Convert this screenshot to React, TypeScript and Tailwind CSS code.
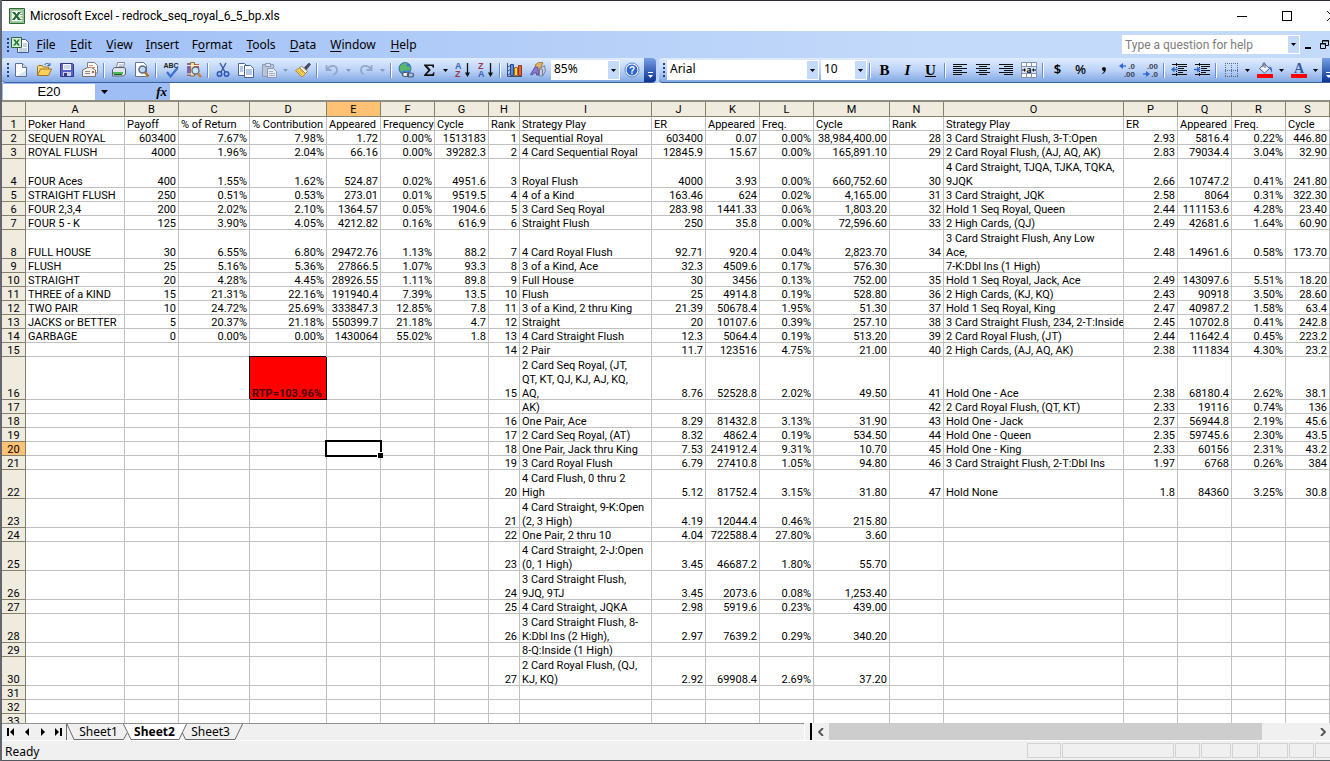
import type { ReactNode } from "react";
import clsx from "clsx";

const columns = [
  { name: "A", width: "w-[99px]" },
  { name: "B", width: "w-[54px]" },
  { name: "C", width: "w-[71px]" },
  { name: "D", width: "w-[77px]" },
  { name: "E", width: "w-[54px]" },
  { name: "F", width: "w-[54px]" },
  { name: "G", width: "w-[54px]" },
  { name: "H", width: "w-[31px]" },
  { name: "I", width: "w-[132px]" },
  { name: "J", width: "w-[54px]" },
  { name: "K", width: "w-[54px]" },
  { name: "L", width: "w-[54px]" },
  { name: "M", width: "w-[76px]" },
  { name: "N", width: "w-[54px]" },
  { name: "O", width: "w-[180px]" },
  { name: "P", width: "w-[54px]" },
  { name: "Q", width: "w-[54px]" },
  { name: "R", width: "w-[54px]" },
  { name: "S", width: "" },
];

const textColumns = ["A", "I", "O"];

// columns A-G, starting at row 1
const payoffs = [
  ["Poker Hand", "Payoff", "% of Return", "% Contribution", "Appeared", "Frequency", "Cycle"],
  ["SEQUEN ROYAL", "603400", "7.67%", "7.98%", "1.72", "0.00%", "1513183"],
  ["ROYAL FLUSH", "4000", "1.96%", "2.04%", "66.16", "0.00%", "39282.3"],
  ["FOUR Aces", "400", "1.55%", "1.62%", "524.87", "0.02%", "4951.6"],
  ["STRAIGHT FLUSH", "250", "0.51%", "0.53%", "273.01", "0.01%", "9519.5"],
  ["FOUR 2,3,4", "200", "2.02%", "2.10%", "1364.57", "0.05%", "1904.6"],
  ["FOUR 5 - K", "125", "3.90%", "4.05%", "4212.82", "0.16%", "616.9"],
  ["FULL HOUSE", "30", "6.55%", "6.80%", "29472.76", "1.13%", "88.2"],
  ["FLUSH", "25", "5.16%", "5.36%", "27866.5", "1.07%", "93.3"],
  ["STRAIGHT", "20", "4.28%", "4.45%", "28926.55", "1.11%", "89.8"],
  ["THREE of a KIND", "15", "21.31%", "22.16%", "191940.4", "7.39%", "13.5"],
  ["TWO PAIR", "10", "24.72%", "25.69%", "333847.3", "12.85%", "7.8"],
  ["JACKS or BETTER", "5", "20.37%", "21.18%", "550399.7", "21.18%", "4.7"],
  ["GARBAGE", "0", "0.00%", "0.00%", "1430064", "55.02%", "1.8"],
  [],
  ["", "", "", "RTP=103.96%"],
];

// columns H-M
const topPlays = [
  ["Rank", "Strategy Play", "ER", "Appeared", "Freq.", "Cycle"],
  ["1", "Sequential Royal", "603400", "0.07", "0.00%", "38,984,400.00"],
  ["2", "4 Card Sequential Royal", "12845.9", "15.67", "0.00%", "165,891.10"],
  ["3", "Royal Flush", "4000", "3.93", "0.00%", "660,752.60"],
  ["4", "4 of a Kind", "163.46", "624", "0.02%", "4,165.00"],
  ["5", "3 Card Seq Royal", "283.98", "1441.33", "0.06%", "1,803.20"],
  ["6", "Straight Flush", "250", "35.8", "0.00%", "72,596.60"],
  ["7", "4 Card Royal Flush", "92.71", "920.4", "0.04%", "2,823.70"],
  ["8", "3 of a Kind, Ace", "32.3", "4509.6", "0.17%", "576.30"],
  ["9", "Full House", "30", "3456", "0.13%", "752.00"],
  ["10", "Flush", "25", "4914.8", "0.19%", "528.80"],
  ["11", "3 of a Kind, 2 thru King", "21.39", "50678.4", "1.95%", "51.30"],
  ["12", "Straight", "20", "10107.6", "0.39%", "257.10"],
  ["13", "4 Card Straight Flush", "12.3", "5064.4", "0.19%", "513.20"],
  ["14", "2 Pair", "11.7", "123516", "4.75%", "21.00"],
  ["15", "2 Card Seq Royal, (JT,\nQT, KT, QJ, KJ, AJ, KQ,\nAQ,", "8.76", "52528.8", "2.02%", "49.50"],
  ["", "AK)"],
  ["16", "One Pair, Ace", "8.29", "81432.8", "3.13%", "31.90"],
  ["17", "2 Card Seq Royal, (AT)", "8.32", "4862.4", "0.19%", "534.50"],
  ["18", "One Pair, Jack thru King", "7.53", "241912.4", "9.31%", "10.70"],
  ["19", "3 Card Royal Flush", "6.79", "27410.8", "1.05%", "94.80"],
  ["20", "4 Card Flush, 0 thru 2\nHigh", "5.12", "81752.4", "3.15%", "31.80"],
  ["21", "4 Card Straight, 9-K:Open\n(2, 3 High)", "4.19", "12044.4", "0.46%", "215.80"],
  ["22", "One Pair, 2 thru 10", "4.04", "722588.4", "27.80%", "3.60"],
  ["23", "4 Card Straight, 2-J:Open\n(0, 1 High)", "3.45", "46687.2", "1.80%", "55.70"],
  ["24", "3 Card Straight Flush,\n9JQ, 9TJ", "3.45", "2073.6", "0.08%", "1,253.40"],
  ["25", "4 Card Straight, JQKA", "2.98", "5919.6", "0.23%", "439.00"],
  ["26", "3 Card Straight Flush, 8-\nK:Dbl Ins (2 High),", "2.97", "7639.2", "0.29%", "340.20"],
  ["", "8-Q:Inside (1 High)"],
  ["27", "2 Card Royal Flush, (QJ,\nKJ, KQ)", "2.92", "69908.4", "2.69%", "37.20"],
];

// columns N-S
const lowPlays = [
  ["Rank", "Strategy Play", "ER", "Appeared", "Freq.", "Cycle"],
  ["28", "3 Card Straight Flush, 3-T:Open", "2.93", "5816.4", "0.22%", "446.80"],
  ["29", "2 Card Royal Flush, (AJ, AQ, AK)", "2.83", "79034.4", "3.04%", "32.90"],
  ["30", "4 Card Straight, TJQA, TJKA, TQKA,\n9JQK", "2.66", "10747.2", "0.41%", "241.80"],
  ["31", "3 Card Straight, JQK", "2.58", "8064", "0.31%", "322.30"],
  ["32", "Hold 1 Seq Royal, Queen", "2.44", "111153.6", "4.28%", "23.40"],
  ["33", "2 High Cards, (QJ)", "2.49", "42681.6", "1.64%", "60.90"],
  ["34", "3 Card Straight Flush, Any Low\nAce,", "2.48", "14961.6", "0.58%", "173.70"],
  ["", "7-K:Dbl Ins (1 High)"],
  ["35", "Hold 1 Seq Royal, Jack, Ace", "2.49", "143097.6", "5.51%", "18.20"],
  ["36", "2 High Cards, (KJ, KQ)", "2.43", "90918", "3.50%", "28.60"],
  ["37", "Hold 1 Seq Royal, King", "2.47", "40987.2", "1.58%", "63.4"],
  ["38", "3 Card Straight Flush, 234, 2-T:Inside", "2.45", "10702.8", "0.41%", "242.8"],
  ["39", "2 Card Royal Flush, (JT)", "2.44", "11642.4", "0.45%", "223.2"],
  ["40", "2 High Cards, (AJ, AQ, AK)", "2.38", "111834", "4.30%", "23.2"],
  ["41", "Hold One - Ace", "2.38", "68180.4", "2.62%", "38.1"],
  ["42", "2 Card Royal Flush, (QT, KT)", "2.33", "19116", "0.74%", "136"],
  ["43", "Hold One - Jack", "2.37", "56944.8", "2.19%", "45.6"],
  ["44", "Hold One - Queen", "2.35", "59745.6", "2.30%", "43.5"],
  ["45", "Hold One - King", "2.33", "60156", "2.31%", "43.2"],
  ["46", "3 Card Straight Flush, 2-T:Dbl Ins", "1.97", "6768", "0.26%", "384"],
  ["47", "Hold None", "1.8", "84360", "3.25%", "30.8"],
];

const rowNumbers = Array.from({ length: 33 }, (_, i) => i + 1);

function cellValue(row: number, col: number) {
  if (col < 7) return payoffs[row]?.[col] ?? "";
  if (col < 13) return topPlays[row]?.[col - 7] ?? "";
  return lowPlays[row]?.[col - 13] ?? "";
}

function Icon({ children, className }: { children: ReactNode; className?: string }) {
  return (
    <svg viewBox="0 0 16 16" className={clsx("h-4 w-4 shrink-0", className)} fill="none" aria-hidden="true">
      {children}
    </svg>
  );
}

const Page = ({ x = 0, y = 0 }: { x?: number; y?: number }) => (
  <path d={`M${x + 0.5} ${y + 0.5}h6l3 3v9h-9z`} fill="#fff" stroke="#4a648f" />
);

const icons = {
  new: (
    <Icon>
      <path d="M2.5 1.5h7l4 4v9h-11z" fill="#fff" stroke="#5c6f93" />
      <path d="M9.500 1.500v4h4" fill="#d5e0f2" stroke="#5c6f93" />
      <path d="M4 14h9V8z" fill="#dbe4f3" />
    </Icon>
  ),
  open: (
    <Icon>
      <path d="M1.500 13.500v-9l1-1h4l1 1.500h5v3" fill="#f7d774" stroke="#a1762a" />
      <path d="M1.500 13.500l3-6.500h11l-3 6.500z" fill="#ffcf5c" stroke="#a1762a" />
      <path d="M8.500 3C10 .8 12.500 1 13.500 3M11.500 3.500h2.500V1" stroke="#37619f" />
    </Icon>
  ),
  save: (
    <Icon>
      <path d="M1.500 1.500h12l1 1v12h-13z" fill="#5b62c6" stroke="#35388a" />
      <path d="M4 2h8v6H4z" fill="#f4f6ff" />
      <path d="M5 4h6M5 6h6" stroke="#a9b4da" />
      <path d="M4 10h8v4H4z" fill="#cbd0ea" />
      <path d="M5 11h3v3H5z" fill="#35388a" />
    </Icon>
  ),
  mail: (
    <Icon>
      <path d="M5.500 7V.5h7l3 3V11h-3" fill="#fff" stroke="#7a7f8d" />
      <path d="M.5 8l5-2.500h4L13.500 8v6.500H.5z" fill="#f3f1ee" stroke="#77736e" />
      <path d="M3 9.500h5M3 11.500h5" stroke="#8b8b92" />
      <path d="M10 9h2v2h-2z" fill="#e04e2e" />
      <path d="M7 3.500h4M7 5.500h6" stroke="#d98a6c" />
    </Icon>
  ),
  print: (
    <Icon>
      <path d="M5.500 6l1-5.500h7L12.500 6" fill="#fff" stroke="#7d8799" />
      <path d="M1.500 7.500l2-2h10l1 1.500v5l-2 2h-11z" fill="#dfe4ea" stroke="#556070" />
      <path d="M2 10h10v2H2z" fill="#4cba52" />
      <path d="M3 12.500h8" stroke="#1f5824" />
      <path d="M8 3h4M7.500 4.500h4" stroke="#9aa8bf" />
    </Icon>
  ),
  preview: (
    <Icon>
      <path d="M1.500.5h8l3 3v11h-11z" fill="#fff" stroke="#66738f" />
      <circle cx="8.500" cy="7.500" r="3.500" fill="#bcdcf7" stroke="#5d6a7e" strokeWidth="1.500" />
      <path d="M11 10.500l3.500 4" stroke="#b0752c" strokeWidth="2.500" />
    </Icon>
  ),
  spelling: (
    <Icon>
      <text x="8" y="6" textAnchor="middle" fontSize="7" fontWeight="700" fill="#1b1b1b" fontFamily="Liberation Sans, sans-serif">
        ABC
      </text>
      <path d="M4 10l3.500 4.500L14.500 6" stroke="#3c6fd0" strokeWidth="2.200" />
    </Icon>
  ),
  research: (
    <Icon>
      <path d="M1 1h3v13H1z" fill="#7d62b5" />
      <path d="M4.500.5h4v13.500h-4z" fill="#f0dca4" stroke="#8b7338" />
      <path d="M9 2h4v9H9z" fill="#cf5540" />
      <path d="M1 3.500h12M1 12h6" stroke="#f6ecd2" />
      <circle cx="9.500" cy="8.500" r="3.500" fill="#cfe6fa" stroke="#5d6a7e" strokeWidth="1.300" />
      <path d="M12 11.500l3 3.500" stroke="#c48332" strokeWidth="2.500" />
    </Icon>
  ),
  cut: (
    <Icon>
      <path d="M5 1l5 9M11 1L6 10" stroke="#3f5f9c" strokeWidth="1.500" />
      <circle cx="4.500" cy="12" r="2.200" stroke="#2b55b5" strokeWidth="1.500" />
      <circle cx="11.500" cy="12" r="2.200" stroke="#2b55b5" strokeWidth="1.500" />
    </Icon>
  ),
  copy: (
    <Icon>
      <Page y={1} />
      <Page x={6} y={3} />
      <path d="M2 5h3M2 7h3M2 9h3M8 8h6M8 10h6M8 12h6" stroke="#6690d6" />
    </Icon>
  ),
  paste: (
    <Icon>
      <path d="M1.500 2.500h11v12h-11z" fill="#b9c4d8" stroke="#8c99b4" />
      <path d="M4.500 1.500h5v3h-5z" fill="#dbe2ee" stroke="#8c99b4" />
      <path d="M6.500 6.500h6l3 3v6h-9z" fill="#e6ecf6" stroke="#8c99b4" />
      <path d="M8 9.500h4M8 11.500h6M8 13.500h6" stroke="#a2aec5" />
    </Icon>
  ),
  painter: (
    <Icon>
      <path d="M9.500 5.500L14 1l1.500 1.500L11.500 7.500z" fill="#4a4f63" stroke="#30374a" strokeWidth=".7" />
      <path d="M6.500 4l6 5.500-2 2-6-5.500z" fill="#f4efe0" stroke="#7a6a45" strokeWidth=".8" />
      <path d="M4.500 6l6 5.500-3.500 3.500L.5 8.500z" fill="#ffd65a" stroke="#9b7420" strokeWidth=".8" />
      <path d="M3 9l4 4M5 8l3.500 3.500" stroke="#c28f26" strokeWidth=".7" />
    </Icon>
  ),
  undo: (
    <Icon>
      <path d="M2.500 3v5h5M3 7.500C6 2.500 12.500 3 13 7.500c.2 2.500-1.500 4.500-4 5.500" stroke="#95a7c8" strokeWidth="1.800" />
    </Icon>
  ),
  redo: (
    <Icon>
      <path d="M13.500 3v5h-5M13 7.500C10 2.500 3.500 3 3 7.500c-.2 2.500 1 4 2.500 5" stroke="#95a7c8" strokeWidth="1.800" />
    </Icon>
  ),
  link: (
    <Icon>
      <circle cx="7" cy="6.500" r="6" fill="#3e86d0" stroke="#285a92" strokeWidth=".8" />
      <path d="M2 4.500c2-3.500 5-4 7-3L8 4l3 1.500L9 9l-3-1-2.500 2C1.500 8 1.500 6 2 4.500zM11 4l1.500 1.500-.5 4-2-2z" fill="#5cb862" />
      <rect x="4.500" y="10.500" width="6" height="4" rx="2" fill="#e9edf3" stroke="#4e5a6c" strokeWidth="1.200" />
      <rect x="9.500" y="11" width="6" height="4" rx="2" stroke="#4e5a6c" strokeWidth="1.200" />
    </Icon>
  ),
  sum: (
    <Icon>
      <path d="M3 2.500h10v3.200h-1.200c-.3-1.300-.8-1.600-2-1.600H6.300L9.800 8l-4 4.200h4.500c1.300 0 1.700-.5 2-1.900h1.200L13 14H3v-1l4.300-4.700L3 3.400z" fill="#111" />
    </Icon>
  ),
  sortAsc: (
    <Icon>
      <text x="0" y="7" fontSize="9" fontWeight="700" fill="#3a5fb4" fontFamily="Liberation Sans, sans-serif">A</text>
      <text x="0" y="15" fontSize="9" fontWeight="700" fill="#a4374c" fontFamily="Liberation Sans, sans-serif">Z</text>
      <path d="M12.500 1v12" stroke="#111" strokeWidth="1.300" />
      <path d="M10 10.500h5L12.500 15z" fill="#111" />
    </Icon>
  ),
  sortDesc: (
    <Icon>
      <text x="0" y="7" fontSize="9" fontWeight="700" fill="#a4374c" fontFamily="Liberation Sans, sans-serif">Z</text>
      <text x="0" y="15" fontSize="9" fontWeight="700" fill="#3a5fb4" fontFamily="Liberation Sans, sans-serif">A</text>
      <path d="M12.500 1v12" stroke="#111" strokeWidth="1.300" />
      <path d="M10 10.500h5L12.500 15z" fill="#111" />
    </Icon>
  ),
  chart: (
    <Icon>
      <path d="M.5 1v13.500H15M1 13l3-2M1 9l3-2M1 5l3-2" stroke="#3d4d6e" />
      <path d="M3.500 2.500h3v11h-3z" fill="#5b8be0" stroke="#27498e" />
      <path d="M7.500 5.500h3v8h-3z" fill="#ffd04d" stroke="#9a7018" />
      <path d="M11.500 3.500h3v10h-3z" fill="#e8603b" stroke="#98341b" />
    </Icon>
  ),
  drawing: (
    <Icon>
      <path d="M5 3l3.500-2.500H13L9.500 8.500H6.500z" fill="#e0b066" stroke="#8d6731" strokeWidth=".7" />
      <path d="M.5 12.500L5 5h2.500l1.500 8H6.500v-2h-3l-1 2z" fill="#8c7bd3" stroke="#4e408f" strokeWidth=".8" />
      <path d="M9.500 6.500l5-3 1 5.500-3 5h-3z" fill="#c6cddb" stroke="#66718a" strokeWidth=".8" />
      <path d="M9.500 6.500l3 1v6.500" stroke="#66718a" strokeWidth=".8" />
    </Icon>
  ),
  help: (
    <Icon>
      <circle cx="8" cy="8" r="7" fill="#fff" stroke="#5b83cf" />
      <circle cx="8" cy="8" r="5.500" fill="#2f66cf" />
      <text x="8" y="11.500" textAnchor="middle" fontSize="10" fontWeight="700" fill="#fff" fontFamily="Liberation Sans, sans-serif">?</text>
    </Icon>
  ),
  left: (
    <Icon>
      <path d="M1 2.500h14M1 4.500h9M1 6.500h14M1 8.500h9M1 10.500h14M1 12.500h9" stroke="#111" />
    </Icon>
  ),
  center: (
    <Icon>
      <path d="M1 2.500h14M4 4.500h8M1 6.500h14M4 8.500h8M1 10.500h14M4 12.500h8" stroke="#111" />
    </Icon>
  ),
  right: (
    <Icon>
      <path d="M1 2.500h14M6 4.500h9M1 6.500h14M6 8.500h9M1 10.500h14M6 12.500h9" stroke="#111" />
    </Icon>
  ),
  merge: (
    <Icon>
      <path d="M.5.5h15v15H.5zM.5 4.500h15M.5 11.500h15M5.500.5v4M10.500.5v4M5.500 11.500v4M10.500 11.500v4" fill="#fff" stroke="#8392ad" />
      <path d="M1 5h14v6H1z" fill="#d9e4f6" />
      <text x="8" y="11" textAnchor="middle" fontSize="10" fontWeight="700" fill="#111" fontFamily="Liberation Serif, serif">a</text>
      <path d="M1 8h3M15 8h-3" stroke="#111" />
      <path d="M3 6l2 2-2 2zM13 6l-2 2 2 2z" fill="#111" />
    </Icon>
  ),
  incDecimal: (
    <Icon>
      <text x="16" y="7" textAnchor="end" fontSize="8" fontWeight="700" fill="#3c4454" fontFamily="Liberation Sans, sans-serif">.0</text>
      <text x="16" y="15" textAnchor="end" fontSize="8" fontWeight="700" fill="#3c4454" fontFamily="Liberation Sans, sans-serif">.00</text>
      <path d="M7 4H2" stroke="#2f66cf" strokeWidth="1.300" />
      <path d="M4 1v6L0 4z" fill="#2f66cf" />
    </Icon>
  ),
  decDecimal: (
    <Icon>
      <text x="16" y="7" textAnchor="end" fontSize="8" fontWeight="700" fill="#3c4454" fontFamily="Liberation Sans, sans-serif">.00</text>
      <text x="16" y="15" textAnchor="end" fontSize="8" fontWeight="700" fill="#3c4454" fontFamily="Liberation Sans, sans-serif">.0</text>
      <path d="M1 12h5" stroke="#2f66cf" strokeWidth="1.300" />
      <path d="M4 9v6l4-3z" fill="#2f66cf" />
    </Icon>
  ),
  outdent: (
    <Icon>
      <path d="M1 2.500h15M7 4.500h9M7 6.500h6M7 8.500h9M7 10.500h5M1 12.500h15" stroke="#111" />
      <path d="M5.500 1v14" stroke="#111" strokeDasharray="1 1" />
      <path d="M7 7.500H2" stroke="#2f66cf" strokeWidth="1.500" />
      <path d="M3.500 4.500v6L0 7.500z" fill="#2f66cf" />
    </Icon>
  ),
  indent: (
    <Icon>
      <path d="M1 2.500h15M7 4.500h9M7 6.500h6M7 8.500h9M7 10.500h5M1 12.500h15" stroke="#111" />
      <path d="M5.500 1v14" stroke="#111" strokeDasharray="1 1" />
      <path d="M0 7.500h4" stroke="#2f66cf" strokeWidth="1.500" />
      <path d="M3 4.500v6l3.500-3z" fill="#2f66cf" />
    </Icon>
  ),
  borders: (
    <Icon>
      <path d="M2.500 1v14M8.500 1v14M14.500 1v14M2 1.500h13M2 8.500h13M2 14.500h13" stroke="#5d6b87" strokeDasharray="1 1" />
    </Icon>
  ),
  fill: (
    <Icon>
      <path d="M2.500 6.500L7.500 2l5 4.500-5 4.500z" fill="#f1f4fa" stroke="#4e5f7d" />
      <path d="M6 5V1.500Q7 0 8 1.500V6" stroke="#4e5f7d" />
      <path d="M12 4.500c2.500 0 3.500 2 3 6.500l-2-4z" fill="#3866bb" />
      <path d="M0 12h16v4H0z" fill="#f00" />
    </Icon>
  ),
  fontColor: (
    <Icon className="overflow-visible">
      <text x="8" y="11" textAnchor="middle" fontSize="14" fontWeight="700" fill="#34579c" fontFamily="Liberation Serif, serif">A</text>
      <path d="M0 12h16v4H0z" fill="#f00" />
    </Icon>
  ),
};

function ExcelLogo({ className }: { className?: string }) {
  return (
    <svg viewBox="0 0 16 16" className={clsx("shrink-0", className)} aria-hidden="true">
      <path d="M.5.5h15v15H.5z" fill="#b9d9b4" stroke="#2c6a34" />
      <path d="M2 2h12v12H2z" fill="#f4faf2" stroke="#6ea873" />
      <path d="M11 4h2.500M11 6.500h2.500M11 9h2.500M11 11.500h2.500" stroke="#7fb585" />
      <path d="M3 4h3l1.500 2.400L9.300 4H12L8.900 7.900 12 12H9L7.400 9.500 5.600 12H3l3.200-4.200z" fill="#1f6a33" />
    </svg>
  );
}

function Caret({ muted = false }: { muted?: boolean }) {
  return (
    <svg viewBox="0 0 5 3" className="h-[3px] w-[5px]" aria-hidden="true">
      <path d="M0 0h5L2.500 3z" fill={muted ? "#8798ba" : "#000"} />
    </svg>
  );
}

function ToolButton({ label, children }: { label: string; children: ReactNode }) {
  return (
    <button type="button" aria-label={label} className="flex h-6 w-[23px] shrink-0 items-center justify-center">
      {children}
    </button>
  );
}

function DropButton({ label, muted }: { label: string; muted?: boolean }) {
  return (
    <button type="button" aria-label={label} className="flex h-6 w-[11px] shrink-0 items-center justify-center">
      <Caret muted={muted} />
    </button>
  );
}

function Separator() {
  return (
    <div className="flex w-[6px] shrink-0 justify-center">
      <div className="h-[15px] w-px bg-[#6a8ccb]" />
      <div className="h-[15px] w-px bg-white" />
    </div>
  );
}

function Grip() {
  return (
    <div className="flex w-[3px] shrink-0 flex-col items-center gap-[2px]">
      {[0, 1, 2, 3].map((i) => (
        <div key={i} className="h-[2px] w-[2px] bg-[#27417c]" />
      ))}
    </div>
  );
}

function Combo({ label, value, className }: { label: string; value: string; className: string }) {
  return (
    <div className={clsx("relative h-5 shrink-0 border border-white bg-white", className)}>
      <select
        aria-label={label}
        className="block h-4 w-full appearance-none bg-transparent pl-[2px] text-[12px] leading-4 outline-none"
      >
        <option>{value}</option>
      </select>
      <div className="pointer-events-none absolute inset-y-0 right-0 flex w-[11px] items-center justify-center bg-[#c3daf9]">
        <Caret />
      </div>
    </div>
  );
}

function ToolbarEnd() {
  return (
    <button
      type="button"
      aria-label="Toolbar options"
      className="ml-px flex h-full w-[12px] shrink-0 flex-col items-center justify-end gap-[2px] rounded-r bg-linear-to-b from-[#759fe6] to-[#10318f] pb-1"
    >
      <span className="h-px w-[5px] bg-white" />
      <svg viewBox="0 0 5 3" className="h-[3px] w-[5px]" aria-hidden="true">
        <path d="M0 0h5L2.500 3z" fill="#fff" />
      </svg>
    </button>
  );
}

function TitleBar() {
  return (
    <header className="flex h-[31px] shrink-0 items-center border-t border-[#2b2b33] bg-white pl-[7px]">
      <ExcelLogo className="h-4 w-4" />
      <h1 className="ml-[5px] font-['Roboto','Noto_Sans',sans-serif] text-[12px]">
        Microsoft Excel - redrock_seq_royal_6_5_bp.xls
      </h1>
      <div className="-mr-6 ml-auto flex h-full">
        <button type="button" aria-label="Minimize" className="flex w-[45px] items-center justify-center">
          <span className="h-px w-[10px] bg-black" />
        </button>
        <button type="button" aria-label="Maximize" className="flex w-[45px] items-center justify-center">
          <span className="h-[10px] w-[10px] border border-black" />
        </button>
        <button type="button" aria-label="Close" className="flex w-[45px] items-center justify-center">
          <svg viewBox="0 0 10 10" className="h-[10px] w-[10px]" aria-hidden="true">
            <path d="M0 0l10 10M10 0L0 10" stroke="#000" />
          </svg>
        </button>
      </div>
    </header>
  );
}

const menus = [
  { before: "", key: "F", after: "ile", width: "w-[34px]" },
  { before: "", key: "E", after: "dit", width: "w-[36px]" },
  { before: "", key: "V", after: "iew", width: "w-[41px]" },
  { before: "", key: "I", after: "nsert", width: "w-[45px]" },
  { before: "F", key: "o", after: "rmat", width: "w-[54px]" },
  { before: "", key: "T", after: "ools", width: "w-[44px]" },
  { before: "", key: "D", after: "ata", width: "w-[40px]" },
  { before: "", key: "W", after: "indow", width: "w-[60px]" },
  { before: "", key: "H", after: "elp", width: "w-[41px]" },
];

function MenuBar() {
  return (
    <nav className="flex h-[27px] shrink-0 items-center bg-linear-to-r from-[#9ebef5] to-[#c4dafa] to-70% pl-1">
      <Grip />
      <svg viewBox="0 0 18 16" className="ml-[2px] h-4 w-[18px] shrink-0" fill="none" aria-hidden="true">
        <path d="M6.500 2.500h8l3 3v10h-11z" fill="#fff" stroke="#41598c" />
        <path d="M12 7h4M12 9h4M8 12h8M8 14h8" stroke="#8aa5d4" />
        <path d="M.5.5h10v10H.5z" fill="#dcebd8" stroke="#2c6a34" />
        <path d="M2 2.500h2.300l1.300 2 1.500-2H9L6.700 5.500 9 8.500H6.800L5.500 6.600 4.100 8.500H2l2.400-3z" fill="#1f7a33" />
      </svg>
      <div className="flex">
        {menus.map((menu) => (
          <button key={menu.key} type="button" className={clsx("shrink-0 text-center text-[12px] leading-4", menu.width)}>
            {menu.before}
            <span className="underline underline-offset-2">{menu.key}</span>
            {menu.after}
          </button>
        ))}
      </div>
      <div className="ml-auto flex h-[19px] w-[178px] shrink-0 border border-white bg-white">
        <input
          aria-label="Help question"
          placeholder="Type a question for help"
          className="min-w-0 flex-1 bg-transparent pl-[2px] font-['Roboto','Noto_Sans',sans-serif] text-[12px] leading-4 outline-none placeholder:text-[#7d7d7d]"
        />
        <button type="button" aria-label="Recent questions" className="flex w-[11px] items-center justify-center bg-[#c3daf9]">
          <Caret />
        </button>
      </div>
      <button type="button" aria-label="Minimize workbook" className="flex h-2 w-4 shrink-0 items-end justify-center">
        <span className="h-[2px] w-[6px] bg-black" />
      </button>
      <button type="button" aria-label="Restore workbook" className="ml-1 -mr-px h-[9px] w-[11px] shrink-0">
        <svg viewBox="0 0 9 9" className="h-[9px] w-[9px]" fill="none" stroke="#000" aria-hidden="true">
          <path d="M2.500 3V.5h6v5H6M2 1h7M.5 3.500h5v5h-5zM0 4h6" />
        </svg>
      </button>
    </nav>
  );
}

function Toolbars() {
  const bar = "flex h-[25px] shrink-0 items-center rounded border-b border-[#3b619c] bg-linear-to-b from-[#dfecfe] via-[#bcd3f8] to-[#82a8e4]";
  return (
    <div className="flex shrink-0 gap-[3px] overflow-hidden bg-[#bfd5f9]">
      <div role="toolbar" aria-label="Standard" className={clsx(bar, "pl-1")}>
        <Grip />
        <ToolButton label="New">{icons.new}</ToolButton>
        <ToolButton label="Open">{icons.open}</ToolButton>
        <ToolButton label="Save">{icons.save}</ToolButton>
        <ToolButton label="E-mail">{icons.mail}</ToolButton>
        <Separator />
        <ToolButton label="Print">{icons.print}</ToolButton>
        <ToolButton label="Print preview">{icons.preview}</ToolButton>
        <Separator />
        <ToolButton label="Spelling">{icons.spelling}</ToolButton>
        <ToolButton label="Research">{icons.research}</ToolButton>
        <Separator />
        <ToolButton label="Cut">{icons.cut}</ToolButton>
        <ToolButton label="Copy">{icons.copy}</ToolButton>
        <ToolButton label="Paste">{icons.paste}</ToolButton>
        <DropButton label="Paste options" muted />
        <ToolButton label="Format painter">{icons.painter}</ToolButton>
        <Separator />
        <ToolButton label="Undo">{icons.undo}</ToolButton>
        <DropButton label="Undo history" muted />
        <ToolButton label="Redo">{icons.redo}</ToolButton>
        <DropButton label="Redo history" muted />
        <Separator />
        <ToolButton label="Insert hyperlink">{icons.link}</ToolButton>
        <ToolButton label="AutoSum">{icons.sum}</ToolButton>
        <DropButton label="AutoSum functions" />
        <ToolButton label="Sort ascending">{icons.sortAsc}</ToolButton>
        <ToolButton label="Sort descending">{icons.sortDesc}</ToolButton>
        <Separator />
        <ToolButton label="Chart wizard">{icons.chart}</ToolButton>
        <ToolButton label="Drawing">{icons.drawing}</ToolButton>
        <Combo label="Zoom" value="85%" className="ml-[2px] w-[69px]" />
        <ToolButton label="Help">{icons.help}</ToolButton>
        <ToolbarEnd />
      </div>
      <div role="toolbar" aria-label="Formatting" className={clsx(bar, "pl-[3px]")}>
        <Grip />
        <Combo label="Font" value="Arial" className="ml-[2px] w-[152px]" />
        <Combo label="Font size" value="10" className="ml-[2px] w-[46px]" />
        <Separator />
        <ToolButton label="Bold">
          <span className="font-['Liberation_Serif',serif] text-[15px] font-black">B</span>
        </ToolButton>
        <ToolButton label="Italic">
          <span className="font-['Liberation_Serif',serif] text-[15px] font-bold italic">I</span>
        </ToolButton>
        <ToolButton label="Underline">
          <span className="font-['Liberation_Serif',serif] text-[15px] font-bold underline">U</span>
        </ToolButton>
        <Separator />
        <ToolButton label="Align left">{icons.left}</ToolButton>
        <ToolButton label="Center">{icons.center}</ToolButton>
        <ToolButton label="Align right">{icons.right}</ToolButton>
        <ToolButton label="Merge and center">{icons.merge}</ToolButton>
        <Separator />
        <ToolButton label="Currency style">
          <span className="text-[13px] font-semibold">$</span>
        </ToolButton>
        <ToolButton label="Percent style">
          <span className="text-[13px] font-medium">%</span>
        </ToolButton>
        <ToolButton label="Comma style">
          <svg viewBox="0 0 4 7" className="h-[7px] w-1" aria-hidden="true">
            <path d="M2 0a2 2 0 0 1 2 2c0 2-1.500 4-3.500 5L0 6.500C1 6 1.800 5 1.900 4A2 2 0 0 1 2 0z" fill="#111" />
          </svg>
        </ToolButton>
        <ToolButton label="Increase decimal">{icons.incDecimal}</ToolButton>
        <ToolButton label="Decrease decimal">{icons.decDecimal}</ToolButton>
        <Separator />
        <ToolButton label="Decrease indent">{icons.outdent}</ToolButton>
        <ToolButton label="Increase indent">{icons.indent}</ToolButton>
        <Separator />
        <ToolButton label="Borders">{icons.borders}</ToolButton>
        <DropButton label="Border styles" />
        <ToolButton label="Fill color">{icons.fill}</ToolButton>
        <DropButton label="Fill colors" />
        <ToolButton label="Font color">{icons.fontColor}</ToolButton>
        <DropButton label="Font colors" />
        <ToolbarEnd />
      </div>
    </div>
  );
}

function FormulaBar() {
  return (
    <div className="flex h-[17px] shrink-0 items-center bg-[#9ebef5] pl-px">
      <input
        aria-label="Name box"
        defaultValue="E20"
        className="h-4 w-[92px] shrink-0 bg-white text-center font-['Liberation_Sans',Arial,sans-serif] text-[13px] leading-4 outline-none"
      />
      <button type="button" aria-label="Named ranges" className="flex w-[18px] shrink-0 items-center justify-center">
        <svg viewBox="0 0 7 4" className="h-1 w-[7px]" aria-hidden="true">
          <path d="M0 0h7L3.500 4z" fill="#000" />
        </svg>
      </button>
      <label
        htmlFor="formula"
        className="w-[57px] shrink-0 pr-[3px] text-right font-['Liberation_Serif',serif] text-[13px] leading-4 font-bold italic"
      >
        fx
      </label>
      <input id="formula" aria-label="Formula" className="h-full min-w-0 flex-1 bg-white px-1 outline-none" />
    </div>
  );
}

function Cell({ row, col }: { row: number; col: number }) {
  const value = cellValue(row - 1, col);
  const column = columns[col].name;
  const isLeft = row === 1 || textColumns.includes(column);
  const isTotal = row === 16 && column === "D";
  const isActive = row === 20 && column === "E";

  return (
    <td
      className={clsx(
        "border-r border-b p-0 align-bottom",
        isTotal
          ? "relative border-black bg-[#ff0000] font-bold text-[#4a0000] shadow-[-1px_-1px_0_#000]"
          : "border-[#c0c0c0]",
        isActive && "relative"
      )}
    >
      {value && (
        <div
          className={clsx(
            "overflow-hidden pl-[2px] whitespace-pre",
            isLeft || isTotal ? "text-left" : "pr-[2px] text-right",
            value.includes("\n") ? "-mb-[2px] pt-[2px] leading-[14px]" : "-mb-px pt-px leading-[13px]"
          )}
        >
          {value}
        </div>
      )}
      {isActive && (
        <>
          <div className="absolute -inset-[2px] border-2 border-black" />
          <div className="absolute -right-[3px] -bottom-[3px] h-[6px] w-[6px] border-t border-l border-white bg-black" />
        </>
      )}
    </td>
  );
}

function Sheet() {
  const head = "border-r border-b border-[#83806c] p-0 text-center font-normal";
  return (
    <main className="min-h-0 flex-1 overflow-hidden border-t-2 border-[#8f8d82] bg-white">
      <table className="w-full table-fixed border-separate border-spacing-0 font-['Roboto','Liberation_Sans',Arial,sans-serif] text-[11px] leading-[13px]">
        <colgroup>
          <col className="w-[24px]" />
          {columns.map((column) => (
            <col key={column.name} className={column.width} />
          ))}
        </colgroup>
        <thead>
          <tr className="h-[15px]">
            <td className={clsx(head, "bg-[#efebde]")} />
            {columns.map((column) => (
              <th
                key={column.name}
                scope="col"
                className={clsx(head, column.name === "E" ? "border-[#1c1c5a] bg-[#ffc174]" : "bg-[#efebde]")}
              >
                {column.name}
              </th>
            ))}
          </tr>
        </thead>
        <tbody>
          {rowNumbers.map((row) => (
            <tr key={row} className="h-[14px]">
              <th
                scope="row"
                className={clsx(head, "align-bottom", row === 20 ? "border-[#1c1c5a] bg-[#ffc174]" : "bg-[#efebde]")}
              >
                <div className="-mb-px pt-px">{row}</div>
              </th>
              {columns.map((column, col) => (
                <Cell key={column.name} row={row} col={col} />
              ))}
            </tr>
          ))}
        </tbody>
      </table>
    </main>
  );
}

const navArrows = [
  { label: "First sheet", path: "M0 0h2v8H0zM7 0v8L3 4z" },
  { label: "Previous sheet", path: "M6 0v8L2 4z" },
  { label: "Next sheet", path: "M2 0v8l4-4z" },
  { label: "Last sheet", path: "M0 0v8l4-4zM5 0h2v8H5z" },
];

function Slash({ path, fill }: { path: string; fill?: string }) {
  return (
    <svg viewBox="0 0 9 16" className="h-4 w-[9px] shrink-0" fill="none" aria-hidden="true">
      {fill && <path d={fill} fill="#fff" />}
      <path d={path} stroke="#6b6b6b" />
    </svg>
  );
}

function SheetTabs() {
  const tab = "h-4 shrink-0 border-b border-[#6b6b6b] text-center text-[12px] leading-4";
  return (
    <div className="flex h-[17px] shrink-0 bg-[#f0f0f0]">
      <div className="flex min-w-0 flex-1 border-t border-[#8f8f8f]">
        {navArrows.map((arrow) => (
          <button key={arrow.label} type="button" aria-label={arrow.label} className="flex w-4 shrink-0 items-center justify-center">
            <svg viewBox="0 0 7 8" className="h-2 w-[7px]" aria-hidden="true">
              <path d={arrow.path} fill="#000" />
            </svg>
          </button>
        ))}
        <div role="tablist" aria-label="Sheets" className="-mt-px flex pt-px">
          <Slash path="M.5 0v16M1 0l7 15.500h1" />
          <button type="button" role="tab" aria-selected="false" className={clsx(tab, "w-[47px]")}>
            Sheet1
          </button>
          <Slash path="M1.500 0L9 15.500M0 15.500h1.500L5 9" fill="M1.500 0H9v16z" />
          <button type="button" role="tab" aria-selected="true" className={clsx(tab, "w-[47px] bg-white font-bold")}>
            Sheet2
          </button>
          <Slash path="M8.500 0L1 15.500H0M4.500 9l3 6.500H9" fill="M8.500 0H0v16h1z" />
          <button type="button" role="tab" aria-selected="false" className={clsx(tab, "w-[47px]")}>
            Sheet3
          </button>
          <Slash path="M0 15.500h1L8.500 0" />
        </div>
      </div>
      <div className="w-2 shrink-0 border-r-2 border-l border-r-black border-l-white bg-[#f0f0f0]" />
      <div className="flex w-[39%] shrink-0">
        <button type="button" aria-label="Scroll left" className="flex w-[17px] items-center justify-center">
          <svg viewBox="0 0 6 8" className="h-2 w-[6px]" fill="none" aria-hidden="true">
            <path d="M5 0L1 4l4 4" stroke="#4f4f4f" strokeWidth="1.800" />
          </svg>
        </button>
        <div className="flex-1">
          <div className="h-full w-[89%] bg-[#cdcdcd]" />
        </div>
        <button type="button" aria-label="Scroll right" className="flex w-[14px] items-center justify-center">
          <svg viewBox="0 0 6 8" className="h-2 w-[6px]" fill="none" aria-hidden="true">
            <path d="M1 0l4 4-4 4" stroke="#4f4f4f" strokeWidth="1.800" />
          </svg>
        </button>
      </div>
    </div>
  );
}

const statusPanels = ["w-[34px]", "w-[112px]", "w-[25px]", "w-[30px]", "w-[26px]", "w-[29px]", "w-[25px]", "w-[16px]"];

function StatusBar() {
  return (
    <footer className="flex h-[21px] shrink-0 items-center border-t border-b border-t-white border-b-[#55585f] bg-[#f0f0f0] pl-[3px]">
      <span className="pt-[2px] text-[12px] leading-4">Ready</span>
      <div className="-mr-px ml-auto flex gap-px">
        {statusPanels.map((width, i) => (
          <div key={i} className={clsx("h-[15px] shrink-0 border border-[#d3d3d3]", width)} />
        ))}
      </div>
    </footer>
  );
}

export default function App() {
  return (
    <div className="flex h-screen flex-col overflow-hidden border-l-2 border-[#63656f] bg-white font-['Noto_Sans','Open_Sans',sans-serif] text-black">
      <TitleBar />
      <MenuBar />
      <Toolbars />
      <FormulaBar />
      <Sheet />
      <SheetTabs />
      <StatusBar />
    </div>
  );
}
